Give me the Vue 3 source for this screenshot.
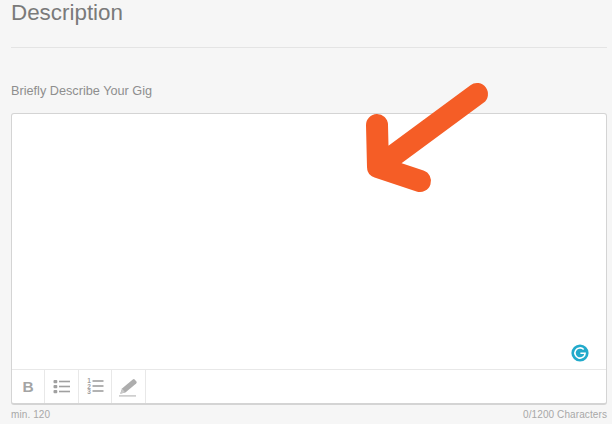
<script setup>
const tools = ["bold", "ul", "ol", "pen"];
</script>

<template>
  <div class="page">
    <h2 class="title">Description</h2>
    <hr class="rule" />
    <label class="label">Briefly Describe Your Gig</label>
    <div class="editor">
      <div class="area">
        <svg class="grammarly" width="18" height="18" viewBox="0 0 18 18">
          <circle cx="9" cy="9" r="8.6" fill="#22aacb" />
          <path d="M12.7 5.5A5.1 5.1 0 1 0 14.1 9.2H9.4" fill="none" stroke="#fff" stroke-width="1.6" />
        </svg>
      </div>
      <div class="toolbar">
        <button v-for="t in tools" :key="t" class="tool" type="button">
          <span v-if="t === 'bold'" class="bold">B</span>
          <svg v-else-if="t === 'ul'" width="18" height="15" viewBox="0 0 18 15">
            <g fill="#a0a0a0">
              <rect x="0.5" y="1" width="3.8" height="3.2" rx="1" />
              <rect x="0.5" y="6" width="3.8" height="3.2" rx="1" />
              <rect x="0.5" y="11" width="3.8" height="3.2" rx="1" />
              <rect x="6" y="1.7" width="11" height="1.6" />
              <rect x="6" y="6.7" width="11" height="1.6" />
              <rect x="6" y="11.7" width="11" height="1.6" />
            </g>
          </svg>
          <svg v-else-if="t === 'ol'" width="18" height="19" viewBox="0 0 18 19">
            <g fill="#a0a0a0">
              <text x="1.2" y="5.7" class="num">1</text>
              <text x="1.2" y="11.5" class="num">2</text>
              <text x="1.2" y="17.3" class="num">3</text>
              <rect x="6.5" y="3.2" width="11" height="1.6" />
              <rect x="6.5" y="8.2" width="11" height="1.6" />
              <rect x="6.5" y="13.2" width="11" height="1.6" />
            </g>
          </svg>
          <svg v-else width="20" height="21" viewBox="0 0 20 21">
            <path d="M4 12.4 14.8 3.4a1.4 1.4 0 0 1 1.9.1l1.7 2a1.4 1.4 0 0 1-.2 1.9L7.4 16.6 2.2 17.8z" fill="#adadad" />
            <path d="M4.4 13 7 16.2 2.2 17.8z" fill="#cacaca" />
            <rect x="1" y="19.2" width="17" height="1.4" fill="#c4c4c4" />
          </svg>
        </button>
      </div>
    </div>
    <div class="foot">
      <span>min. 120</span>
      <span>0/1200 Characters</span>
    </div>
    <svg class="arrow" width="612" height="424" viewBox="0 0 612 424">
      <path d="M477 94 378 167M377 125 378 167 420 181" fill="none" stroke="#f55d26" stroke-width="22" stroke-linecap="round" stroke-linejoin="round" />
    </svg>
  </div>
</template>

<style>
html, body {
  margin: 0;
  background: #f6f6f6;
}
</style>

<style scoped>
.page {
  position: relative;
  width: 612px;
  height: 424px;
  overflow: hidden;
  box-sizing: border-box;
  padding: 0 5px 0 11px;
  background: #f6f6f6;
  font-family: "Liberation Sans", Arial, sans-serif;
}

.title {
  margin: 0;
  height: 47px;
  font-size: 22.4px;
  line-height: 25px;
  font-weight: 400;
  color: #7a7a7a;
}

.rule {
  margin: 0;
  border: 0;
  height: 1px;
  background: #e4e4e4;
}

.label {
  display: block;
  margin-top: 36px;
  height: 29px;
  font-size: 12.7px;
  line-height: 15px;
  color: #8e8e8e;
}

.editor {
  box-sizing: border-box;
  height: 292px;
  display: flex;
  flex-direction: column;
  background: #fff;
  border: 1px solid #d4d4d4;
  border-width: 1px 1px 2px 1px;
  border-radius: 3px;
}

.area {
  flex: 1;
  position: relative;
  border-bottom: 1px solid #e8e8e8;
}

.grammarly {
  position: absolute;
  right: 17px;
  bottom: 7px;
}

.toolbar {
  height: 33px;
  display: flex;
}

.tool {
  width: 33.4px;
  padding: 0;
  border: 0;
  border-right: 1px solid #e8e8e8;
  background: none;
  display: flex;
  align-items: center;
  justify-content: center;
}

.bold {
  font-size: 15.5px;
  font-weight: 700;
  color: #a4a4a4;
}

.num {
  font-size: 6.5px;
  font-weight: 700;
}

.foot {
  display: flex;
  justify-content: space-between;
  margin-top: 3px;
  font-size: 10px;
  line-height: 13px;
  letter-spacing: 0.1px;
  color: #a8a8a8;
}

.arrow {
  position: absolute;
  left: 0;
  top: 0;
  pointer-events: none;
}
</style>
